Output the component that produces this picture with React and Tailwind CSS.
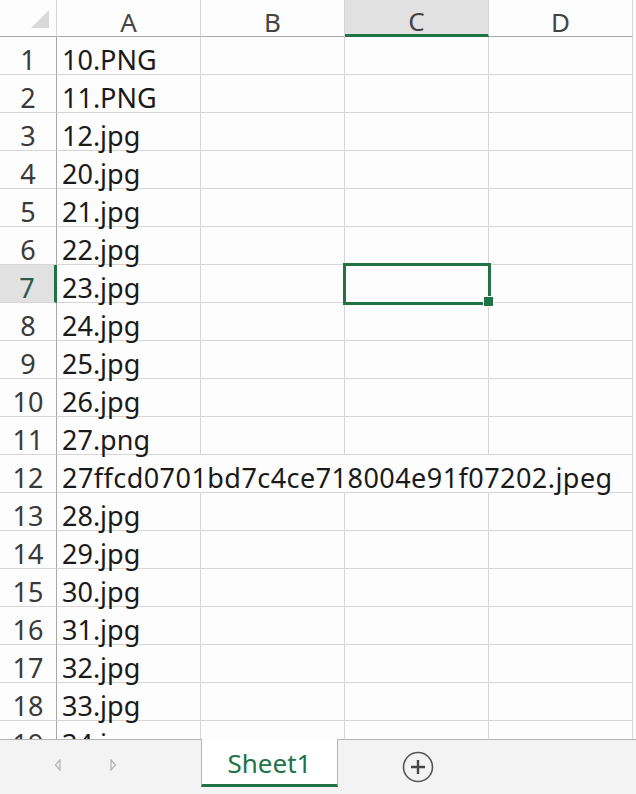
const rows = [
  '10.PNG', '11.PNG', '12.jpg', '20.jpg', '21.jpg', '22.jpg', '23.jpg', '24.jpg', '25.jpg',
  '26.jpg', '27.png', '27ffcd0701bd7c4ce718004e91f07202.jpeg', '28.jpg', '29.jpg', '30.jpg',
  '31.jpg', '32.jpg', '33.jpg', '34.jpg',
];

const cols = ['A', 'B', 'C', 'D'];
const font = { fontFamily: '"Noto Sans", "Noto Sans CJK SC", sans-serif' };

function HeaderRow() {
  return (
    <div className="flex h-[37px] shrink-0">
      <div className="w-[57px] h-full border-r border-b border-r-[#d6d6d6] border-b-[#ababab] flex items-start">
        <svg width="57" height="36" className="block">
          <polygon points="31,28 49,28 49,10" fill="#d9d9d9" />
        </svg>
      </div>
      {cols.map((c) =>
        c === 'C' ? (
          <div
            key={c}
            className="w-[144px] h-full bg-[#e1e1e1] border-r border-r-[#d6d6d6] border-b-[3px] border-b-[#217346] flex items-end justify-center text-[26px] leading-none text-[#444] pb-0"
          >
            {c}
          </div>
        ) : (
          <div
            key={c}
            className="w-[144px] h-full border-r border-r-[#d6d6d6] border-b border-b-[#ababab] flex items-end justify-center text-[26px] leading-none text-[#444] pb-[1px]"
          >
            {c}
          </div>
        )
      )}
    </div>
  );
}

function Row({ n, text }) {
  const selected = n === 7;
  const long = text.length > 12;
  return (
    <div className="flex h-[38px] shrink-0">
      <div
        className={
          selected
            ? 'w-[57px] h-full bg-[#e1e1e1] border-r-[3px] border-r-[#217346] border-b border-b-[#d6d6d6] flex items-end justify-center text-[27px] leading-none text-[#2f5a47] pb-[1px]'
            : 'w-[57px] h-full border-r border-r-[#a8a8a8] border-b border-b-[#d6d6d6] flex items-end justify-center text-[27px] leading-none text-[#3a3a3a] pb-[1px]'
        }
      >
        {n}
      </div>
      <div
        className={
          long
            ? 'w-[144px] h-full border-b border-b-[#d6d6d6] flex items-end pl-[5px] text-[27px] tracking-[0.45px] leading-none text-[#1a1a1a] pb-[1px] whitespace-nowrap overflow-visible relative z-10'
            : 'w-[144px] h-full border-r border-b border-[#d6d6d6] flex items-end pl-[5px] text-[27px] leading-none text-[#1a1a1a] pb-[1px] whitespace-nowrap'
        }
      >
        {text}
      </div>
      <div className={long ? 'w-[144px] h-full border-b border-[#d6d6d6]' : 'w-[144px] h-full border-r border-b border-[#d6d6d6]'} />
      <div className={long ? 'w-[144px] h-full border-b border-[#d6d6d6]' : 'w-[144px] h-full border-r border-b border-[#d6d6d6]'} />
      <div className="w-[144px] h-full border-r border-b border-[#d6d6d6]" />
    </div>
  );
}

function TabBar() {
  return (
    <div className="h-[55px] shrink-0 flex items-start bg-[#f3f3f3]">
      <div className="w-[201px] h-full border-t border-[#b4b4b4] flex items-center pb-[4px]">
        <svg width="8" height="12" viewBox="0 0 8 12" className="ml-[54px]">
          <polygon points="6,1 1.5,6 6,11" fill="none" stroke="#b5b5b5" strokeWidth="1.3" />
        </svg>
        <svg width="8" height="12" viewBox="0 0 8 12" className="ml-[47px]">
          <polygon points="2,1 6.5,6 2,11" fill="none" stroke="#b5b5b5" strokeWidth="1.3" />
        </svg>
      </div>
      <div className="w-[137px] h-[48px] bg-white border-x border-[#b4b4b4] border-b-[3px] border-b-[#217346] flex items-center justify-center text-[26px] text-[#217346] leading-none pt-[2px]">
        Sheet1
      </div>
      <div className="flex-1 h-full border-t border-[#b4b4b4] flex items-center pb-[1px]">
        <svg width="32" height="32" viewBox="0 0 32 32" className="ml-[64px]">
          <circle cx="16" cy="16" r="14.5" fill="none" stroke="#555" strokeWidth="1.6" />
          <path d="M16 9v14M9 16h14" stroke="#444" strokeWidth="2.4" />
        </svg>
      </div>
    </div>
  );
}

export default function App() {
  return (
    <div className="w-[636px] h-[794px] bg-[#fdfdfd] flex flex-col overflow-hidden" style={font}>
      {/* grid area */}
      <div className="relative h-[739px] shrink-0 overflow-hidden flex flex-col">
        <HeaderRow />
        {rows.map((t, i) => (
          <Row key={i} n={i + 1} text={t} />
        ))}
        {/* selection on C7 */}
        <div className="absolute left-[343px] top-[263px] w-[148px] h-[42px] border-[3px] border-[#217346] z-20" />
        <div className="absolute left-[483px] top-[296px] w-[11px] h-[11px] bg-[#217346] border border-white z-30" />
      </div>
      <TabBar />
    </div>
  );
}
